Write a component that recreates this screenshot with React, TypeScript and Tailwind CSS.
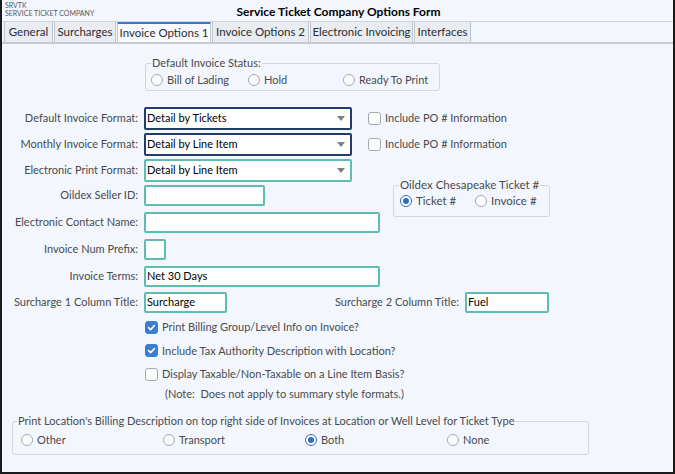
import React from 'react';

const font = { fontFamily: '"Segoe UI", Lato, "Noto Sans", sans-serif' };

const tabs = [
  { label: 'General', w: 'w-[49px]' },
  { label: 'Surcharges', w: 'w-[62px]' },
  { label: 'Invoice Options 1', w: 'w-[94px]', active: true },
  { label: 'Invoice Options 2', w: 'w-[97px]' },
  { label: 'Electronic Invoicing', w: 'w-[103px]' },
  { label: 'Interfaces', w: 'w-[57px]' },
];

const Radio = ({ label, checked, className = '' }: { label: string; checked?: boolean; className?: string }) => (
  <div className={`flex items-center gap-[4px] ${className}`}>
    <span
      className={`w-[12px] h-[12px] rounded-full border flex items-center justify-center bg-white ${
        checked ? 'border-[#2f6cc0]' : 'border-[#a3a9b0]'
      }`}
    >
      {checked && <span className="w-[6px] h-[6px] rounded-full bg-[#2f6cc0]" />}
    </span>
    <span>{label}</span>
  </div>
);

const Check = ({ label, checked, className = '' }: { label: string; checked?: boolean; className?: string }) => (
  <div className={`flex items-center gap-[4px] ${className}`}>
    <span
      className={`w-[13px] h-[13px] rounded-[3px] border flex items-center justify-center ${
        checked ? 'bg-[#3b7dd0] border-[#3b7dd0]' : 'bg-white border-[#a3a9b0]'
      }`}
    >
      {checked && (
        <svg width="9" height="9" viewBox="0 0 10 10">
          <path d="M1.8 5.2 L4 7.3 L8.3 2.8" fill="none" stroke="white" strokeWidth="1.8" strokeLinecap="round" strokeLinejoin="round" />
        </svg>
      )}
    </span>
    <span>{label}</span>
  </div>
);

const Select = ({ value, navy }: { value: string; navy?: boolean }) => (
  <div
    className={`w-[208px] h-[23px] border-2 rounded-[2px] bg-white flex items-center justify-between pl-[1px] pr-[5px] text-black ${
      navy ? 'border-[#223c6b]' : 'border-[#5dbdb3]'
    }`}
  >
    <span>{value}</span>
    <svg width="8" height="5" viewBox="0 0 8 5">
      <path d="M0 0 H8 L4 5 Z" fill="#7c7f84" />
    </svg>
  </div>
);

const Input = ({ w, value = '' }: { w: string; value?: string }) => (
  <div className={`${w} h-[21px] border-2 border-[#5dbdb3] rounded-[2px] bg-white flex items-center pl-[1px] text-black`}>
    {value}
  </div>
);

const Label = ({ children }: { children: React.ReactNode }) => (
  <div className="w-[136px] text-right shrink-0 whitespace-nowrap">{children}</div>
);

export default function App() {
  return (
    <div
      style={font}
      className="w-[675px] h-[474px] border-x-2 border-b-2 border-[#1a1a1a] bg-[#f3f7fd] text-[11px] text-[#474a4f] flex flex-col overflow-hidden"
    >
      <div className="relative h-[22px] shrink-0 border-b border-[#cfd4da]">
        <div className="absolute left-[3px] top-[1px] text-[7px] leading-[8px] text-[#55585c]">
          <div>SRVTK</div>
          <div>SERVICE TICKET COMPANY</div>
        </div>
        <div className="text-center font-bold text-[12px] text-black leading-[23px] pl-[2px]">
          Service Ticket Company Options Form
        </div>
      </div>
      <div className="h-[22px] shrink-0 flex items-end pl-[2px] border-b-2 border-[#c5cbd2]">
        {tabs.map(t => (
          <div
            key={t.label}
            className={`${t.w} h-[21px] mr-[1px] flex items-center justify-center border-x border-t whitespace-nowrap text-[11.5px] ${
              t.active
                ? 'bg-[#f7f9fc] border-[#c3c8ce] border-t-[3px] border-t-[#2f7ad8] text-[#2b2e33]'
                : 'bg-[#e9ecf0] border-[#bfc5cc] text-[#2b2e33]'
            }`}
          >
            {t.label}
          </div>
        ))}
      </div>

      <div className="flex flex-col">
        <fieldset className="ml-[143px] mt-[13px] w-[295px] h-[34px] border border-[#d3d8de] rounded-[3px] px-[5px]">
          <legend className="px-[1px] leading-[12px]">Default Invoice Status:</legend>
          <div className="flex items-center mt-[3px]">
            <Radio label="Bill of Lading" className="w-[97px]" />
            <Radio label="Hold" className="w-[95px]" />
            <Radio label="Ready To Print" />
          </div>
        </fieldset>

        <div className="flex items-center gap-[6px] mt-[16px]">
          <Label>Default Invoice Format:</Label>
          <Select value="Detail by Tickets" navy />
          <Check label="Include PO # Information" className="ml-[10px]" />
        </div>
        <div className="flex items-center gap-[6px] mt-[3px]">
          <Label>Monthly Invoice Format:</Label>
          <Select value="Detail by Line Item" navy />
          <Check label="Include PO # Information" className="ml-[10px]" />
        </div>
        <div className="flex items-center gap-[6px] mt-[3px]">
          <Label>Electronic Print Format:</Label>
          <Select value="Detail by Line Item" />
        </div>

        <div className="flex items-start mt-[3px]">
          <div className="flex flex-col">
            <div className="flex items-center gap-[6px]">
              <Label>Oildex Seller ID:</Label>
              <Input w="w-[121px]" />
            </div>
            <div className="flex items-center gap-[6px] mt-[6px]">
              <Label>Electronic Contact Name:</Label>
              <Input w="w-[236px]" />
            </div>
          </div>
          <fieldset className="ml-[13px] -mt-[6px] w-[157px] h-[38px] border border-[#d3d8de] rounded-[3px] px-[6px]">
            <legend className="px-[1px] ml-[-1px] leading-[12px] text-[11.5px]">Oildex Chesapeake Ticket #</legend>
            <div className="flex items-center text-[11.5px] mt-[1px]">
              <Radio label="Ticket #" checked className="w-[75px]" />
              <Radio label="Invoice #" />
            </div>
          </fieldset>
        </div>

        <div className="flex items-center gap-[6px] mt-[6px]">
          <Label>Invoice Num Prefix:</Label>
          <Input w="w-[22px]" />
        </div>
        <div className="flex items-center gap-[6px] mt-[6px]">
          <Label>Invoice Terms:</Label>
          <Input w="w-[236px]" value="Net 30 Days" />
        </div>
        <div className="flex items-center gap-[6px] mt-[5px]">
          <Label>Surcharge 1 Column Title:</Label>
          <Input w="w-[83px]" value="Surcharge" />
          <div className="w-[226px] text-right">Surcharge 2 Column Title:</div>
          <Input w="w-[84px]" value="Fuel" />
        </div>

        <div className="ml-[143px] mt-[6px] flex flex-col gap-[7px]">
          <Check label="Print Billing Group/Level Info on Invoice?" checked />
          <Check label="Include Tax Authority Description with Location?" checked />
          <Check label="Display Taxable/Non-Taxable on a Line Item Basis?" />
        </div>
        <div className="ml-[163px] mt-[3px] whitespace-pre">(Note:  Does not apply to summary style formats.)</div>

        <fieldset className="ml-[10px] mt-[13px] w-[577px] h-[40px] border border-[#d3d8de] rounded-[3px] px-[8px]">
          <legend className="px-[1px] ml-[-4px] leading-[12px]">
            Print Location's Billing Description on top right side of Invoices at Location or Well Level for Ticket Type
          </legend>
          <div className="flex items-center mt-[5px]">
            <Radio label="Other" className="w-[142px]" />
            <Radio label="Transport" className="w-[142px]" />
            <Radio label="Both" checked className="w-[142px]" />
            <Radio label="None" />
          </div>
        </fieldset>
      </div>
    </div>
  );
}
